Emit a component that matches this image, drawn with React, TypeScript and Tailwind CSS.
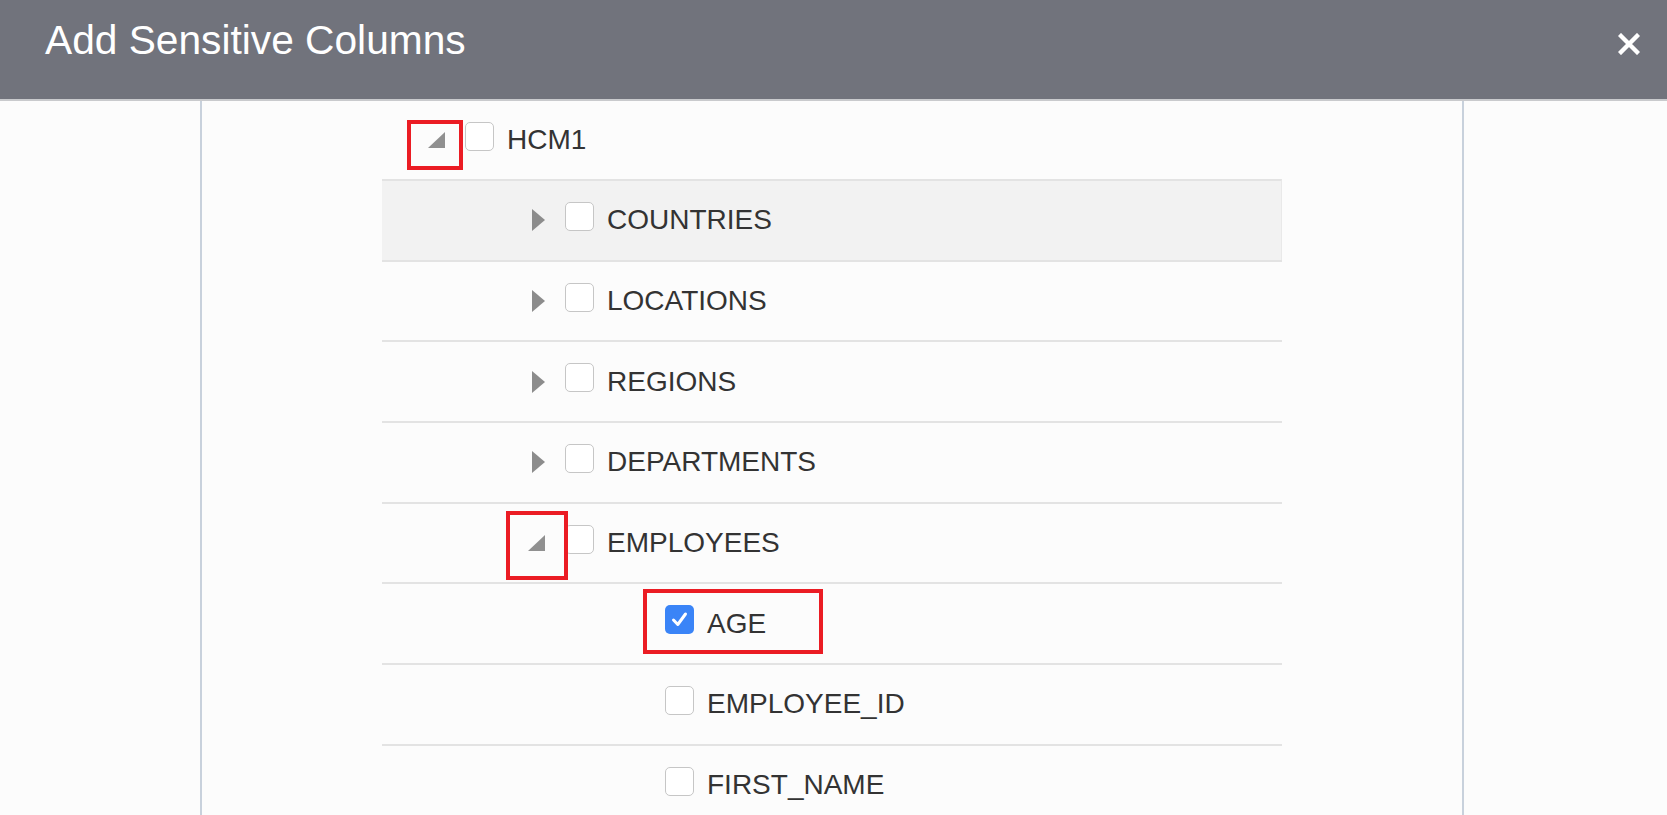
import React from "react";

type Node = {
  label: string;
  level: 0 | 1 | 2;
  toggle?: "open" | "closed";
  checked?: boolean;
  highlight?: boolean;
  redToggle?: boolean;
  redItem?: boolean;
};

const padByLevel = ["pl-[43px]", "pl-[143px]", "pl-[243px]"];

function TriangleClosed() {
  return (
    <svg width="13" height="22" viewBox="0 0 13 22" className="block">
      <polygon points="0,0 13,11 0,22" fill="#8c8c8c" />
    </svg>
  );
}

function TriangleOpen() {
  return (
    <svg width="17" height="16" viewBox="0 0 17 16" className="block">
      <polygon points="0,16 17,16 17,0" fill="#909090" />
    </svg>
  );
}

function Checkbox({ checked }: { checked?: boolean }) {
  if (checked) {
    return (
      <div className="w-[29px] h-[29px] mb-[8px] rounded-[5px] bg-[#3a84f7] flex items-center justify-center shrink-0">
        <svg width="21" height="21" viewBox="0 0 21 21">
          <path d="M4.5 11 L8.8 15.5 L16.5 5" fill="none" stroke="#ffffff" strokeWidth="3" strokeLinecap="round" strokeLinejoin="round" />
        </svg>
      </div>
    );
  }
  return (
    <div className="w-[29px] h-[29px] mb-[8px] rounded-[5px] bg-white border-[1.5px] border-[#c6c6c6] shrink-0" />
  );
}

function Row({ node, first }: { node: Node; first?: boolean }) {
  const base = first
    ? "relative h-[78px]"
    : "relative h-[80.7px] border-t-2 border-[#e3e3e3]";
  const bg = node.highlight ? " bg-[#f2f2f2] border-r border-r-[#e9e9e9]" : "";
  return (
    <div className={base + bg}>
      <div className={"flex items-center h-full " + padByLevel[node.level]}>
        <div className="w-[40px] flex justify-end pr-[20px] shrink-0">
          {node.toggle === "open" && <TriangleOpen />}
          {node.toggle === "closed" && <TriangleClosed />}
        </div>
        <Checkbox checked={node.checked} />
        <span className="ml-[13px] text-[28px] leading-none text-[#333333] whitespace-nowrap">
          {node.label}
        </span>
      </div>
      {node.redToggle && node.level === 0 && (
        <div className="absolute left-[25px] top-[19px] w-[56px] h-[50px] border-[4.5px] border-[#eb1c24]" />
      )}
      {node.redToggle && node.level === 1 && (
        <div className="absolute left-[124px] top-[7px] w-[62px] h-[69px] border-[4.5px] border-[#eb1c24]" />
      )}
      {node.redItem && (
        <div className="absolute left-[261px] top-[5px] w-[180px] h-[65px] border-[4.5px] border-[#eb1c24]" />
      )}
    </div>
  );
}

const nodes: Node[] = [
  { label: "HCM1", level: 0, toggle: "open", redToggle: true },
  { label: "COUNTRIES", level: 1, toggle: "closed", highlight: true },
  { label: "LOCATIONS", level: 1, toggle: "closed" },
  { label: "REGIONS", level: 1, toggle: "closed" },
  { label: "DEPARTMENTS", level: 1, toggle: "closed" },
  { label: "EMPLOYEES", level: 1, toggle: "open", redToggle: true },
  { label: "AGE", level: 2, checked: true, redItem: true },
  { label: "EMPLOYEE_ID", level: 2 },
  { label: "FIRST_NAME", level: 2 },
];

export default function App() {
  return (
    <div className="w-[1667px] h-[815px] overflow-hidden bg-[#fcfcfc] font-['Liberation_Sans',Arial,sans-serif] flex flex-col">
      <div className="h-[101px] shrink-0 bg-[#71737c] border-b-2 border-[#c9cacd] flex justify-between items-start">
        <div className="pl-[45px] pt-[20px] text-[40.7px] leading-none text-white whitespace-nowrap">
          Add Sensitive Columns
        </div>
        <div className="pr-[27px] pt-[33px]">
          <svg width="22" height="22" viewBox="0 0 22 22" className="block">
            <path d="M3 3 L19 19 M19 3 L3 19" stroke="#ffffff" strokeWidth="4.4" strokeLinecap="square" />
          </svg>
        </div>
      </div>
      <div className="flex-1 min-h-0 flex">
        <div className="ml-[200px] w-[1264px] h-full border-x-2 border-[#c8d1dc]">
          <div className="ml-[180px] w-[900px]">
            {nodes.map((n, i) => (
              <Row key={n.label} node={n} first={i === 0} />
            ))}
          </div>
        </div>
      </div>
    </div>
  );
}
